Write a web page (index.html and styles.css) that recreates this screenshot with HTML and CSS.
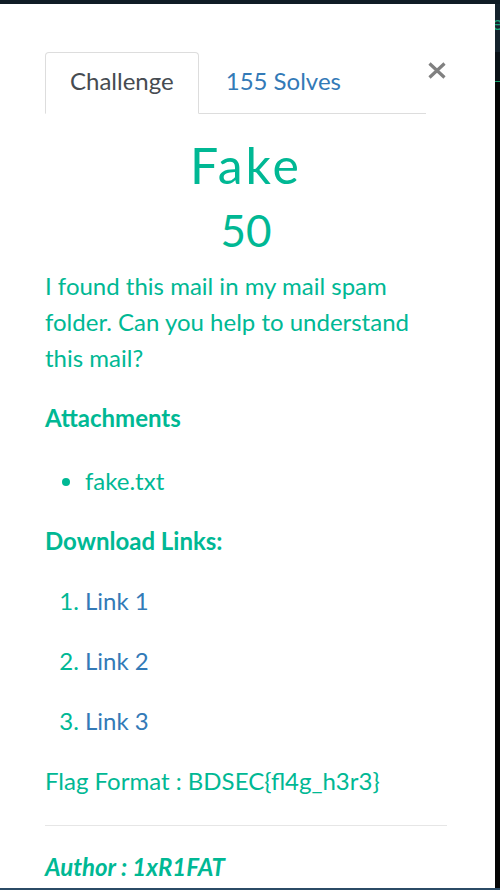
FILE: index.html
```html
<!DOCTYPE html>
<html lang="en">
<head>
<meta charset="utf-8">
<title>Fake</title>
<link rel="stylesheet" href="styles.css">
</head>
<body>
<div class="screen">
  <div class="modal">
    <div class="modal-head">
      <ul class="tabs">
        <li class="tab active">Challenge</li>
        <li class="tab"><a href="#">155 Solves</a></li>
      </ul>
      <button class="close" aria-label="Close">
        <svg width="18" height="17" viewBox="0 0 18 17"><path d="M1.5 1.5L16.5 15.5M16.5 1.5L1.5 15.5" stroke="#808080" stroke-width="3.2" stroke-linecap="butt"/></svg>
      </button>
    </div>
    <h1 class="title">Fake</h1>
    <h3 class="points">50</h3>
    <p class="desc">I found this mail in my mail spam folder. Can you help to understand this mail?</p>
    <h4 class="sub">Attachments</h4>
    <ul class="files">
      <li>fake.txt</li>
    </ul>
    <h4 class="sub">Download Links:</h4>
    <ol class="links">
      <li><a href="#">Link 1</a></li>
      <li><a href="#">Link 2</a></li>
      <li><a href="#">Link 3</a></li>
    </ol>
    <p class="flag">Flag Format : BDSEC{fl4g_h3r3}</p>
    <hr class="rule">
    <p class="author">Author : 1xR1FAT</p>
  </div>
  <div class="side">
    <div class="side-top"><span class="side-e">e</span></div>
    <div class="side-line"></div>
    <div class="side-rest"></div>
  </div>
</div>
<div class="bottom-bar"></div>
</body>
</html>
```

FILE: styles.css
```css
* { box-sizing: border-box; }
html, body { margin: 0; padding: 0; }
body {
  width: 500px;
  height: 890px;
  overflow: hidden;
  background: #0f1c25;
  font-family: Lato, "Open Sans", sans-serif;
  color: #00b894;
}
.screen {
  display: flex;
  padding-top: 4px;
  height: 888px;
}
.modal {
  width: 495px;
  height: 884px;
  background: #fff;
  padding: 48px 48px 0 45px;
  overflow: hidden;
}
.modal-head {
  display: flex;
  align-items: flex-start;
}
.tabs {
  list-style: none;
  margin: 0;
  padding: 0;
  display: flex;
  width: 381px;
  border-bottom: 1px solid #dddddd;
}
.tab {
  font-size: 24px;
  line-height: 30px;
  padding: 13px 24px 17px;
  margin-right: 2px;
  margin-bottom: -1px;
  border: 1px solid transparent;
  border-radius: 4px 4px 0 0;
}
.tab a { color: #337ab7; text-decoration: none; }
.tab.active {
  color: #464b51;
  border-color: #dddddd;
  border-bottom-color: #fff;
  background: #fff;
}
.close {
  border: 0;
  background: none;
  padding: 0;
  margin: 10px 0 0 2px;
  width: 18px;
  height: 17px;
  line-height: 0;
  cursor: pointer;
}
.title {
  margin: 24px 0 0;
  text-align: center;
  font-weight: 400;
  font-size: 50px;
  line-height: 55px;
  letter-spacing: 3px;
}
.points {
  margin: 13px 0 0;
  text-align: center;
  font-weight: 400;
  font-size: 44px;
  line-height: 48px;
}
.desc {
  margin: 14px 0 24px;
  font-size: 24px;
  line-height: 36px;
}
.sub {
  margin: 0 0 24px;
  font-size: 24px;
  line-height: 36px;
  font-weight: 700;
}
.sub + .files { margin-top: 27px; }
.files, .links {
  margin: 0 0 24px;
  padding-left: 40px;
  font-size: 24px;
  line-height: 36px;
}
.links li { margin-bottom: 24px; }
.links li:last-child { margin-bottom: 0; }
.links a { color: #337ab7; text-decoration: none; }
.flag {
  margin: 0;
  font-size: 24px;
  line-height: 36px;
}
.rule {
  margin: 26px 0 23px;
  border: 0;
  border-top: 1px solid #e6e6e6;
}
.author {
  margin: 0;
  font-size: 24px;
  line-height: 36px;
  font-weight: 700;
  font-style: italic;
}
.side {
  width: 5px;
  height: 884px;
  display: flex;
  flex-direction: column;
  overflow: hidden;
}
.side-top {
  height: 48px;
  background: #15232d;
  position: relative;
}
.side-e {
  position: absolute;
  left: -3px;
  top: 6px;
  color: #1aa37a;
  font-size: 20px;
  line-height: 24px;
}
.side-line {
  height: 30px;
  background: #0b1217;
  border-bottom: 1px solid #14a06c;
}
.side-rest {
  flex: 1;
  background: #050505;
}
.bottom-bar {
  height: 2px;
  background: #2b4b66;
}
```
